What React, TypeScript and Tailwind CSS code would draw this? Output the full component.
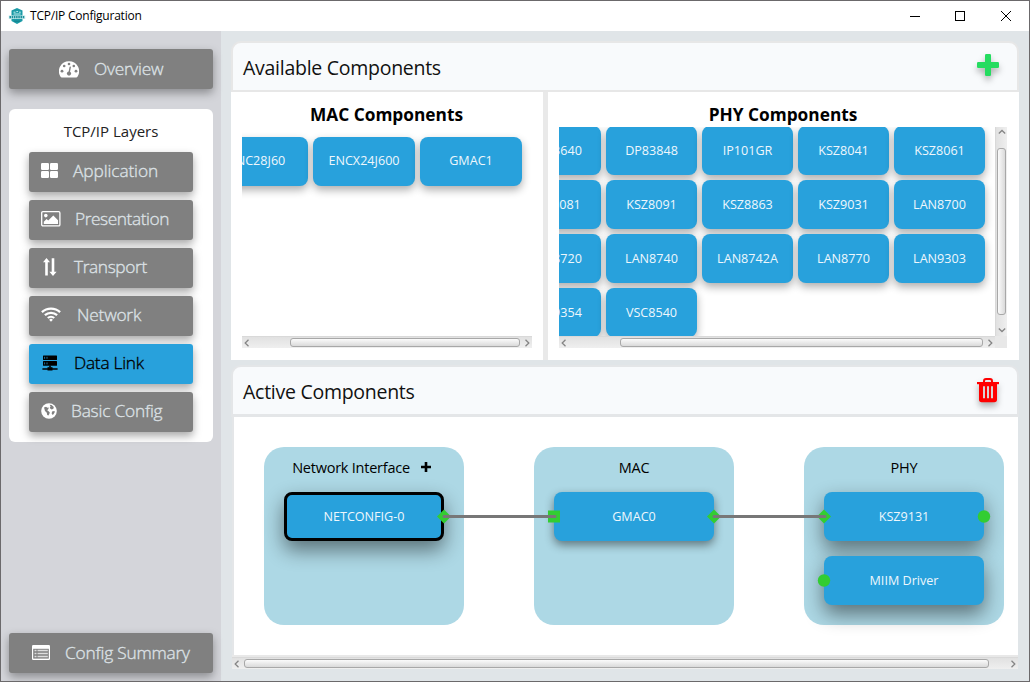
import React from "react";

const Logo = () => (
  <svg width="18" height="18" viewBox="0 0 18 18">
    <path d="M9 1 L14.5 3.6 V14 L9 17 L3.5 14 V3.6 Z" fill="#1b9aa6" />
    <path d="M5.5 5.2h2M8.3 4.6h1.8M11 5.2h1.8M5.6 7h7" stroke="#c5edf0" strokeWidth="1" />
    <rect x="0.8" y="8.4" width="16.4" height="3.6" fill="#bfe6e9" />
    <path d="M1.5 10.2h15" stroke="#1d8f9b" strokeWidth="2.2" strokeDasharray="1.5 0.7" />
    <path d="M6 14.2h6" stroke="#127f8b" strokeWidth="1" />
  </svg>
);

const GaugeIcon = () => (
  <svg width="20" height="17" viewBox="0 0 20 17">
    <path d="M10 0.2a10 10 0 0 0-8.6 15.2c.4.7.8 1.1 1.4 1.1h14.4c.6 0 1-.4 1.4-1.1A10 10 0 0 0 10 .2z" fill="#fff" />
    <g fill="#808080">
      <circle cx="10" cy="3" r="1.3" />
      <circle cx="5.2" cy="5" r="1.3" />
      <circle cx="14.8" cy="5" r="1.3" />
      <circle cx="3" cy="10.2" r="1.4" />
      <circle cx="17" cy="10.2" r="1.4" />
      <circle cx="10" cy="12.6" r="2.1" />
    </g>
    <path d="M10 12.3 L11.2 6.2" stroke="#808080" strokeWidth="1.4" strokeLinecap="round" />
  </svg>
);

const TableIcon = () => (
  <svg width="18" height="15" viewBox="0 0 18 15">
    <rect x="0" y="0" width="18" height="15" rx="1.3" fill="#fff" />
    <rect x="1.2" y="3.8" width="15.6" height="9.8" fill="#808080" />
    <path d="M2.5 5.5h2M5.5 5.5h10.3M2.5 8.5h2M5.500 8.5h10.3M2.5 11.5h2M5.5 11.5h10.3" stroke="#dcdcdc" strokeWidth="1.4" />
  </svg>
);

const GridIcon = () => (
  <svg width="17" height="15" viewBox="0 0 17 15" fill="#fff">
    <rect x="0" y="0" width="8" height="7" rx="1.2" />
    <rect x="9" y="0" width="8" height="7" rx="1.2" />
    <rect x="0" y="8" width="8" height="7" rx="1.2" />
    <rect x="9" y="8" width="8" height="7" rx="1.2" />
  </svg>
);

const PictureIcon = () => (
  <svg width="20" height="16" viewBox="0 0 20 16">
    <rect x="0.7" y="0.7" width="18.2" height="14.2" rx="1.2" fill="none" stroke="#fff" strokeWidth="1.3" />
    <circle cx="4.8" cy="4.6" r="1.8" fill="#fff" />
    <path d="M2.8 13V10.8L5.6 8l1.6 1.6L12.3 4.6 17 9.3V13z" fill="#fff" />
  </svg>
);

const ArrowsIcon = () => (
  <svg width="14" height="18" viewBox="0 0 14 18" fill="#fff">
    <path d="M3.5 0L7 4.2H4.8V17.6H2.2V4.2H0z" />
    <path d="M10 18L6.4 13.8H8.7V0.2H11.3V13.8H13.6z" />
  </svg>
);

const WifiIcon = () => (
  <svg width="20" height="15" viewBox="0 0 20 15" fill="none" stroke="#fff" strokeWidth="2.3">
    <path d="M0.9 5.2a13.2 13.2 0 0 1 18.2 0" />
    <path d="M3.900 8.2a9 9 0 0 1 12.2 0" />
    <path d="M6.8 11a4.800 4.800 0 0 1 6.4 0" />
    <path d="M10 11.4l1.9 1.3L10 14.8 8.1 12.7z" fill="#fff" stroke="none" />
  </svg>
);

const ServerIcon = () => (
  <svg width="16" height="16" viewBox="0 0 16 16">
    <rect x="1" y="0.5" width="14" height="4.600" rx="0.5" fill="#000" />
    <rect x="1" y="6.1" width="14" height="4.600" rx="0.5" fill="#000" />
    <path d="M8 10.5v2M0.4 14h15.2" stroke="#000" strokeWidth="1.6" />
    <rect x="5.5" y="12.200" width="5" height="3.300" fill="#000" />
    <path d="M2.6 1.8v2M5 1.8v2M2.6 7.4v2M5 7.4v2" stroke="#28a1dc" strokeWidth="0.7" />
  </svg>
);

const GlobeIcon = () => (
  <svg width="16" height="16" viewBox="0 0 16 16">
    <circle cx="8" cy="8" r="7.8" fill="#fff" />
    <path d="M3 4.600L5 3.800l1.400 1 1.400-.2-.4 1.400L6.200 7.200l1.400 1 1.200 1.200-.6 1.800-.8 1.400L6.200 12 5.800 9.800 4 8z" fill="#808080" />
    <path d="M8.600 1.800l2 .2 2.200 2-.4 1.800-1.600.6-1.400-.6-.6-1.400.8-1z" fill="#808080" />
    <path d="M11 8.600l2.400-.6.4 1-1.400 2.600-1.200.2-.4-1.600z" fill="#808080" />
  </svg>
);

const TrashIcon = () => (
  <svg width="22" height="25" viewBox="0 0 22 25">
    <path d="M7 4.5V3.2Q7 1 9 1h4q2 0 2 2.2v1.3" fill="none" stroke="#f00" strokeWidth="2" />
    <rect x="0" y="4" width="22" height="2.2" fill="#f00" />
    <path d="M2 6h18v15.5q0 2.7-2.7 2.7H4.7Q2 24.200 2 21.500z" fill="#f00" />
    <path d="M7 8.200v12M11 8.200v12M15 8.200v12" stroke="#d8d4d4" strokeWidth="2" />
  </svg>
);

const Chevron = ({ d }: { d: string }) => (
  <svg width="6" height="8" viewBox="0 0 6 8" fill="none" stroke="#858585" strokeWidth="1.3">
    <path d={d} />
  </svg>
);

const HScroll = ({ lead, thumb }: { lead: string; thumb: string }) => (
  <div className="flex h-[12px] items-center border-t border-[#d9d9d9] bg-linear-to-b from-[#e1e1e1] to-[#efefef] pl-[2px]">
    <Chevron d="M4.500 0.800L1.200 4l3.300 3.200" />
    <div className={lead} />
    <div className={`h-[9px] rounded-[3px] border border-[#a8a8a8] bg-linear-to-b from-[#fbfbfb] to-[#dadada] ${thumb}`} />
    <div className="flex-1" />
    <Chevron d="M1.500 0.800L4.800 4 1.500 7.200" />
    <div className="w-[2px]" />
  </div>
);

type Layer = { label: string; icon: React.ReactNode; pad: string; text: string; active?: boolean };
const layers: Layer[] = [
  { label: "Application", icon: <GridIcon />, pad: "w-[32px]", text: "tracking-[-0.1px]" },
  { label: "Presentation", icon: <PictureIcon />, pad: "w-[34px]", text: "tracking-[-0.42px]" },
  { label: "Transport", icon: <span className="ml-[2px]"><ArrowsIcon /></span>, pad: "w-[33px]", text: "tracking-[-0.37px]" },
  { label: "Network", icon: <WifiIcon />, pad: "w-[36px]", text: "tracking-[-0.2px]" },
  { label: "Data Link", icon: <span className="ml-px"><ServerIcon /></span>, pad: "w-[33px]", text: "tracking-[-0.25px]", active: true },
  { label: "Basic Config", icon: <GlobeIcon />, pad: "w-[30px]", text: "tracking-[-0.2px]" },
];

const buttonText = "text-[17.3px] leading-[40px] font-light whitespace-nowrap [-webkit-text-stroke:0.35px]";

const Card = ({ label, size }: { label: string; size: string }) => (
  <div className={`flex h-[49px] shrink-0 items-center justify-center rounded-[8px] bg-[#28a1dc] text-[12.6px] text-[#eef7fc] shadow-[0_4px_9px_rgba(0,0,0,0.32)] ${size}`}>
    {label}
  </div>
);

const phyRows = [
  ["DP83640", "DP83848", "IP101GR", "KSZ8041", "KSZ8061"],
  ["KSZ8081", "KSZ8091", "KSZ8863", "KSZ9031", "LAN8700"],
  ["LAN8720", "LAN8740", "LAN8742A", "LAN8770", "LAN9303"],
  ["LAN9354", "VSC8540"],
];

const Node = ({ label, style }: { label: string; style: string }) => (
  <div className={`flex h-[49px] w-[160px] items-center justify-center rounded-[8px] bg-[#28a1dc] text-[12.6px] text-[#eef7fc] ${style}`}>
    <span className="pt-[2px]">{label}</span>
  </div>
);

const Group = ({ title, children }: { title: React.ReactNode; children: React.ReactNode }) => (
  <div className="flex h-[178px] w-[200px] flex-col items-center rounded-[20px] bg-[#add8e5] pt-[11px]">
    <div className="flex h-[20px] items-center text-[14.5px] tracking-[-0.24px]">{title}</div>
    <div className="mt-[14px] flex flex-col gap-[15px]">{children}</div>
  </div>
);

const headText = "text-[19.5px] tracking-[-0.27px] leading-[49px] text-[#111]";
const deepShadow = "shadow-[0_9px_20px_rgba(0,0,0,0.48)]";

export default function App() {
  return (
    <div className="flex h-[682px] w-[1030px] flex-col overflow-hidden border border-[#6b696b] bg-[#e0e5e8] font-['Open_Sans','Noto_Sans',sans-serif] text-black">
      <div className="flex h-[30px] shrink-0 items-center bg-white pl-[7px]">
        <Logo />
        <span className="ml-[4px] text-[12px] tracking-[-0.22px]">TCP/IP Configuration</span>
        <svg className="mr-[16px] ml-auto" width="104" height="12" viewBox="0 0 104 12" fill="none" stroke="#000" strokeWidth="1">
          <path d="M1 6.500H11" />
          <rect x="46.500" y="1.500" width="9" height="9" />
          <path d="M92 1L102 11M102 1L92 11" />
        </svg>
      </div>

      <div className="flex min-h-0 flex-1">
        <aside className="flex w-[220px] shrink-0 flex-col bg-[#d4d5da] px-[8px] pt-[18px] pb-[8px]">
          <div className="flex h-[40px] items-center rounded-[3px] bg-[#808080] pl-[50px] text-[#dce1e5] shadow-[0_4px_10px_rgba(0,0,0,0.35)]">
            <GaugeIcon />
            <span className={`ml-[15px] tracking-[-0.25px] ${buttonText}`}>Overview</span>
          </div>
          <div className="mt-[20px] h-[333px] rounded-[6px] bg-white px-[20px] pt-[11px]">
            <div className="mb-[10px] text-center text-[15px] leading-[22px] text-[#222]">TCP/IP Layers</div>
            <div className="flex flex-col gap-[8px]">
              {layers.map((l) => (
                <div
                  key={l.label}
                  className={`flex h-[40px] items-center rounded-[3px] pl-[12px] shadow-[0_4px_9px_rgba(0,0,0,0.35)] ${l.active ? "bg-[#28a1dc] text-black" : "bg-[#808080] text-[#dce1e5]"}`}
                >
                  <div className={`flex shrink-0 pb-[3px] ${l.pad}`}>{l.icon}</div>
                  <span className={`pb-[3px] ${buttonText} ${l.text}`}>{l.label}</span>
                </div>
              ))}
            </div>
          </div>
          <div className="mt-auto flex h-[40px] items-center rounded-[3px] bg-[#808080] pl-[23px] text-[#dce1e5] shadow-[0_4px_10px_rgba(0,0,0,0.35)]">
            <span className="-mt-[2px]">
              <TableIcon />
            </span>
            <span className={`ml-[15px] tracking-[-0.2px] ${buttonText}`}>Config Summary</span>
          </div>
        </aside>

        <main className="flex flex-1 flex-col px-[10px] pt-[10px]">
          <div className="flex h-[51px] shrink-0 justify-between rounded-t-[10px] border-2 border-[#e7e7e7] bg-[#f8fafc] pr-[18px] pl-[10px]">
            <span className={headText}>Available Components</span>
            <svg className="mt-[11px] drop-shadow-[0_4px_3px_rgba(0,0,0,0.3)]" width="22" height="22" viewBox="0 0 22 22" fill="#25dc60">
              <rect x="8" y="0" width="6" height="22" rx="1.2" />
              <rect x="0" y="8" width="22" height="6" rx="1.2" />
            </svg>
          </div>

          <div className="flex h-[268px] shrink-0 gap-[5px] bg-[#e9e9e9]">
            <section className="w-[312px] bg-white px-[11px]">
              <h2 className="h-[35px] pr-px text-center text-[17.3px] leading-[45px] font-bold">MAC Components</h2>
              <div className="flex h-[209px] justify-end gap-[5px] overflow-hidden pt-[10px] pr-[10px]">
                <Card label="ENC28J60" size="w-[102px]" />
                <Card label="ENCX24J600" size="w-[102px]" />
                <Card label="GMAC1" size="w-[102px]" />
              </div>
              <HScroll lead="w-[40px]" thumb="w-[230px]" />
            </section>
            <section className="w-[471px] bg-white pr-[12px] pl-[11px]">
              <h2 className="h-[35px] text-center text-[17.3px] leading-[45px] font-bold">PHY Components</h2>
              <div className="flex h-[209px]">
                <div className="flex w-[436px] flex-col overflow-hidden">
                  <div className="-mt-px flex flex-col gap-[5px] pr-[10px]">
                    {phyRows.map((row) => (
                      <div key={row[0]} className="flex justify-end gap-[5px]">
                        {row.map((c) => (
                          <Card key={c} label={c} size="w-[91px] pt-px" />
                        ))}
                        {row.length < 5 && <div className="w-[283px] shrink-0" />}
                      </div>
                    ))}
                  </div>
                </div>
                <div className="flex w-[12px] flex-col items-center border-l border-[#d9d9d9] bg-linear-to-r from-[#e1e1e1] to-[#efefef]">
                  <svg className="mt-[2px]" width="8" height="6" viewBox="0 0 8 6" fill="none" stroke="#858585" strokeWidth="1.300">
                    <path d="M0.800 4.500L4 1.500l3.200 3" />
                  </svg>
                  <div className="mt-[13px] h-[167px] w-[9px] rounded-[3px] border border-[#a8a8a8] bg-linear-to-r from-[#fbfbfb] to-[#dadada]" />
                  <svg className="mt-[12px]" width="8" height="6" viewBox="0 0 8 6" fill="none" stroke="#858585" strokeWidth="1.300">
                    <path d="M0.800 1.500L4 4.500l3.200-3" />
                  </svg>
                </div>
              </div>
              <div className="bg-[#e8e8e8] pr-[12px]">
                <HScroll lead="w-[53px]" thumb="w-[363px]" />
              </div>
            </section>
          </div>

          <div className="mt-[5px] flex h-[52px] shrink-0 justify-between rounded-t-[10px] border-2 border-b-[3px] border-[#e4e6e8] bg-[#f8fafc] pr-[18px] pl-[10px]">
            <span className={headText}>Active Components</span>
            <span className="mt-[11px] drop-shadow-[0_4px_3px_rgba(0,0,0,0.3)]">
              <TrashIcon />
            </span>
          </div>

          <div className="relative mr-px ml-px flex h-[238px] shrink-0 gap-[70px] border-l-2 border-[#e4e6e8] bg-white pt-[30px] pl-[30px]">
            <Group
              title={
                <>
                  <span>Network Interface</span>
                  <svg className="mr-[5px] ml-[11px] -mt-[3px]" width="10" height="10" viewBox="0 0 10 10">
                    <path d="M5 0v10M0 5h10" stroke="#000" strokeWidth="2.600" />
                  </svg>
                </>
              }
            >
              <Node label="NETCONFIG-0" style={`border-3 border-black ${deepShadow}`} />
            </Group>
            <Group title="MAC">
              <Node label="GMAC0" style="shadow-[0_4px_10px_rgba(0,0,0,0.45)]" />
            </Group>
            <Group title="PHY">
              <Node label="KSZ9131" style={deepShadow} />
              <Node label="MIIM Driver" style={deepShadow} />
            </Group>
            <svg className="absolute top-0 left-0" width="784" height="238" viewBox="0 0 784 238">
              <g fill="#32cd32">
                <path d="M203 99.500l7-7 7 7-7 7z" />
                <rect x="314" y="93.500" width="12" height="12" />
                <path d="M473 99.500l7-7 7 7-7 7z" />
                <path d="M583 99.500l7-7 7 7-7 7z" />
                <circle cx="750" cy="99.500" r="6.200" />
                <circle cx="590" cy="163.500" r="6.200" />
              </g>
              <path d="M210 99.500H321M480 99.500H591" stroke="#777" strokeWidth="3" strokeLinecap="round" />
            </svg>
          </div>
          <div className="mr-px ml-px border-t-2 border-[#e8e8e8]">
            <HScroll lead="w-[4px]" thumb="w-[745px]" />
          </div>
        </main>
      </div>
    </div>
  );
}
